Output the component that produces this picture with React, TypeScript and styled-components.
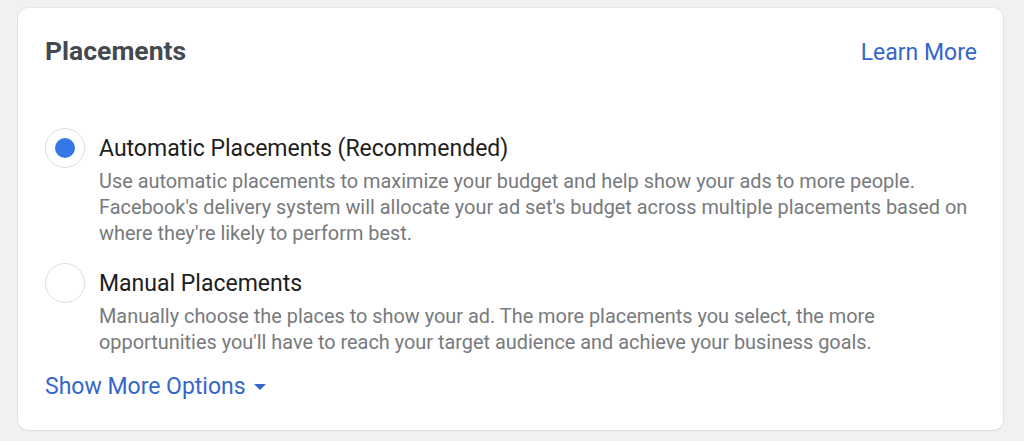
import React from "react";
import styled, { createGlobalStyle } from "styled-components";

const Global = createGlobalStyle`
  html, body { margin: 0; padding: 0; background: #f0f2f1; }
  body { font-family: Roboto, "Liberation Sans", sans-serif; -webkit-font-smoothing: antialiased; }
`;

const Page = styled.div`
  padding: 8px 21px 11px 18px;
`;

const Card = styled.section`
  background: #ffffff;
  border-radius: 10px;
  box-shadow: 0 0 0 1px rgba(0, 0, 0, 0.04), 0 1px 2px rgba(0, 0, 0, 0.06);
  padding: 27px 26px 28px 27px;
  height: 422px;
  box-sizing: border-box;
`;

const Header = styled.div`
  display: flex;
  justify-content: space-between;
  align-items: baseline;
  margin-bottom: 61px;
`;

const Title = styled.h2`
  margin: 0;
  font-size: 26.5px;
  line-height: 32px;
  font-weight: 700;
  color: #444950;
`;

const Link = styled.a`
  font-size: 23px;
  line-height: 28px;
  color: #3467c9;
  text-decoration: none;
  cursor: pointer;
  display: inline-flex;
  align-items: center;
  gap: 8px;
`;

const Options = styled.div`
  display: flex;
  flex-direction: column;
  gap: 16px;
`;

const Option = styled.label`
  display: grid;
  grid-template-columns: 40px 1fr;
  column-gap: 14px;
  cursor: pointer;
`;

const Radio = styled.span<{ $checked?: boolean }>`
  width: 40px;
  height: 40px;
  border-radius: 50%;
  box-sizing: border-box;
  border: 1.5px solid #dadde1;
  display: flex;
  align-items: center;
  justify-content: center;
  background: #fff;
  &::after {
    content: "";
    width: 20px;
    height: 20px;
    border-radius: 50%;
    background: ${(p) => (p.$checked ? "#3578e5" : "transparent")};
  }
`;

const Text = styled.div`
  display: flex;
  flex-direction: column;
`;

const Label = styled.div`
  font-size: 23px;
  line-height: 40px;
  padding-top: 1px;
  color: #1c1e21;
  white-space: nowrap;
`;

const Desc = styled.div`
  font-size: 19.9px;
  line-height: 26px;
  color: #777a7d;
  white-space: nowrap;
`;

const Footer = styled.div`
  margin-top: 17px;
`;

const Caret = () => (
  <svg width="12" height="7" viewBox="0 0 12 7" aria-hidden="true">
    <path d="M0 0 L12 0 L6 6 Z" fill="#3467c9" />
  </svg>
);

export default function App() {
  return (
    <>
      <Global />
      <Page>
        <Card>
          <Header>
            <Title>Placements</Title>
            <Link>Learn More</Link>
          </Header>
          <Options>
            <Option>
              <Radio $checked />
              <Text>
                <Label>Automatic Placements (Recommended)</Label>
                <Desc>
                  Use automatic placements to maximize your budget and help show your ads to more people.
                  <br />
                  Facebook's delivery system will allocate your ad set's budget across multiple placements based on
                  <br />
                  where they're likely to perform best.
                </Desc>
              </Text>
            </Option>
            <Option>
              <Radio />
              <Text>
                <Label>Manual Placements</Label>
                <Desc>
                  Manually choose the places to show your ad. The more placements you select, the more
                  <br />
                  opportunities you'll have to reach your target audience and achieve your business goals.
                </Desc>
              </Text>
            </Option>
          </Options>
          <Footer>
            <Link>
              Show More Options <Caret />
            </Link>
          </Footer>
        </Card>
      </Page>
    </>
  );
}
